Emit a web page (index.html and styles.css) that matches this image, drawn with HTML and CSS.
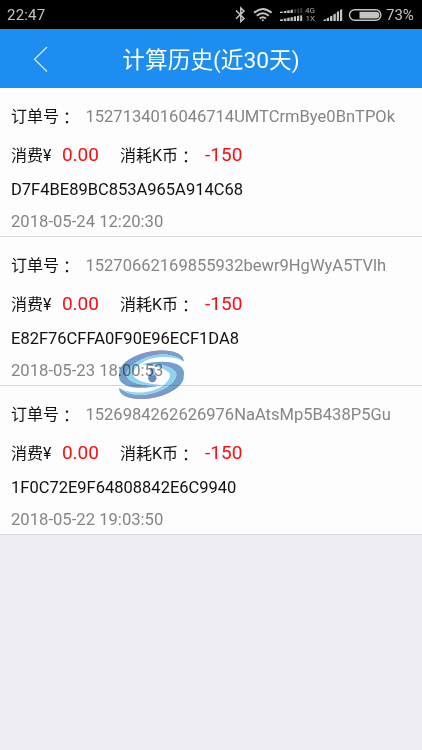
FILE: index.html
```html
<!DOCTYPE html>
<html lang="zh-CN">
<head>
<meta charset="utf-8">
<title>计算历史</title>
<link rel="stylesheet" href="styles.css">
</head>
<body>
<div class="status">
  <span class="clock">22:47</span>
  <svg class="status-icons" width="152" height="30" viewBox="0 0 152 30" fill="none" stroke="#c4c4c4">
    <path d="M2 10.500 10 18.500 6.800 21.500V8L10 11 2 18.800" stroke-width="1.5"/>
    <g stroke-width="2">
      <path d="M20 12.8q8.8-7.7 17.6 0M22.8 15.8q6-5.2 12 0M25.6 18.5q3.2-2.6 6.400 0"/>
      <circle cx="28.8" cy="20.200" r="1" fill="#c4c4c4" stroke="none"/>
    </g>
    <g fill="#c4c4c4" stroke="none">
      <path d="M46 13v-1.2l2.800-.4V13zM49.800 13v-1.800l2.600-.4V13zM53.200 13v-2.400l2.400-.4V13zM56.500 13v-3l2.300-.6V13z"/>
      <path d="M60 13V9h2.200v4zM63.300 13V8.500h1.800V13zM66.200 13V8h2v5z" fill="#363636"/>
      <path d="M46 21v-1.500l2.800-.4V21zM49.800 21v-2.200l2.600-.4V21zM53.200 21v-3l2.400-.4V21zM56.500 21v-3.700l2.300-.4V21zM59.800 21v-4.400l2.200-.4V21zM63 21v-5l2.200-.4V21zM66.200 21v-5.500l2-.3V21z"/>
      <path d="M89.500 21v-1.200l2.300-.8v2zM92.700 21v-2.700l2.300-.9V21zM96 21v-4.400l2.400-1V21zM99.400 21v-6.600l2.400-1V21zM102.800 21V12l2.200-1v10zM106 21V10l2.200-1v12z"/>
    </g>
    <rect x="115.500" y="9.800" width="31.400" height="10.400" rx="5.200" stroke-width="1.400"/>
    <path d="M125.500 11.700h16.500a3.400 3.400 0 0 1 0 6.800H125.500z" fill="#c4c4c4" stroke="none"/>
    <text class="net" x="71" y="13.300">4G</text>
    <text class="net" x="71.500" y="21.300">1X</text>
  </svg>
  <span class="percent">73%</span>
</div>
<header class="bar">
  <svg class="back" width="16" height="28" viewBox="0 0 16 28" fill="none" stroke="#dcecfd" stroke-width="1.2"><path d="M14 2 1.500 14.300 14 26.500"/></svg>
  <h1>计算历史(近30天)</h1>
</header>
<main>
  <article class="order">
    <div class="line number"><span class="label">订单号<i lang="zh-TW">：</i></span><span class="value">1527134016046714UMTCrmBye0BnTPOk</span></div>
    <div class="line cost"><span class="label">消费¥</span><b class="money">0.00</b><span class="label">消耗K币<i lang="zh-TW">：</i></span><b class="coins">-150</b></div>
    <div class="line code">D7F4BE89BC853A965A914C68</div>
    <div class="line date">2018-05-24 12:20:30</div>
  </article>
  <article class="order">
    <div class="line number"><span class="label">订单号<i lang="zh-TW">：</i></span><span class="value">15270662169855932bewr9HgWyA5TVlh</span></div>
    <div class="line cost"><span class="label">消费¥</span><b class="money">0.00</b><span class="label">消耗K币<i lang="zh-TW">：</i></span><b class="coins">-150</b></div>
    <div class="line code">E82F76CFFA0F90E96ECF1DA8</div>
    <div class="line date">2018-05-23 18:00:53</div>
  </article>
  <article class="order">
    <div class="line number"><span class="label">订单号<i lang="zh-TW">：</i></span><span class="value">1526984262626976NaAtsMp5B438P5Gu</span></div>
    <div class="line cost"><span class="label">消费¥</span><b class="money">0.00</b><span class="label">消耗K币<i lang="zh-TW">：</i></span><b class="coins">-150</b></div>
    <div class="line code">1F0C72E9F64808842E6C9940</div>
    <div class="line date">2018-05-22 19:03:50</div>
  </article>
</main>
<svg class="mark" width="68" height="52" viewBox="0 0 68 52">
  <defs>
    <linearGradient id="rim" x1="0" x2="1"><stop offset="0" stop-color="#4f8bc4"/><stop offset=".55" stop-color="#7f7ab8"/><stop offset="1" stop-color="#5b98cc"/></linearGradient>
    <g id="swirl">
      <path d="M65.500 11.500C56 3 40 3 27 8C14 13 7 21 9 27C13 34 30 37 44 35C25 40 2 39 1 27C0 13 20 1 43 .500C57 .300 67 5 65.500 11.500Z" fill="#5b8dc5"/>
      <path d="M1 23C2 11 22 1 43 .500C57 .300 66 5 65.500 11.500C60 4 50 1.500 38 3C19 5 5 14 1 23Z" fill="url(#rim)"/>
      <path d="M65 11.500C56 3 40 3 27 8C14 13 7 21 9 27C13 34 30 37 44 35C29 34 15 30 15 24C16 16 29 7 45 7C53 7 60 8 65 11.500Z" fill="#7ccdec"/>
    </g>
  </defs>
  <g opacity=".84">
    <use href="#swirl"/>
    <use href="#swirl" transform="rotate(180 33.500 24.800)"/>
    <circle cx="34.300" cy="28" r="4.200" fill="#4779b8"/>
    <path d="M32 18.500Q34.500 17 37 19L35.800 26H33Z" fill="#7b9dcc"/>
  </g>
</svg>
</body>
</html>
```
FILE: styles.css
```css
* { box-sizing: border-box; }
body {
  margin: 0;
  min-height: 750px;
  position: relative;
  background: #eeedf3;
  color: #111;
  font-family: Roboto, "Noto Sans CJK SC", sans-serif;
  overflow: hidden;
}
.status {
  height: 29px;
  padding: 0 7px;
  display: flex;
  align-items: center;
  background: #000;
  color: #c4c4c4;
  font-size: 15px;
}
.clock { letter-spacing: .2px; }
.status-icons { margin-left: auto; flex: none; }
.net { font: 8px Roboto, sans-serif; fill: #aaa; stroke: none; }
.percent { width: 29px; white-space: nowrap; font-size: 15px; }
.bar {
  height: 59px;
  display: grid;
  grid-template-columns: 88px 1fr 88px;
  align-items: center;
  background: #1d8df2;
  color: #fff;
}
.back { margin-left: 33px; }
.bar h1 {
  margin: 0;
  padding-bottom: 1px;
  font-size: 22.7px;
  font-weight: 400;
  text-align: center;
  white-space: nowrap;
}
.order {
  height: 149px;
  padding: 10px 11px 0;
  background: #fdfdfd;
  border-bottom: 1px solid #d9d9db;
}
.line { display: flex; align-items: center; white-space: nowrap; font-size: 16.5px; }
.label { font-size: 16px; padding-bottom: 2px; }
.label i { display: inline-block; line-height: 1; padding-top: 2px; vertical-align: -2px; font-family: "Noto Sans CJK TC", sans-serif; font-style: normal; }
.number { height: 36px; }
.number .label { width: 74.5px; }
.value, .date { color: #858585; }
.value { font-size: 16.55px; }
.cost { height: 41px; }
.cost b { padding-bottom: 1px; font-size: 19px; font-weight: 400; color: #fb0d12; }
.money { margin: 0 21px 0 10.5px; }
.coins { margin-left: 11px; }
.code { height: 28px; font-size: 16.5px; }
.date { height: 36px; font-size: 16.65px; }
.mark { position: absolute; left: 118px; top: 350px; mix-blend-mode: multiply; }
```
